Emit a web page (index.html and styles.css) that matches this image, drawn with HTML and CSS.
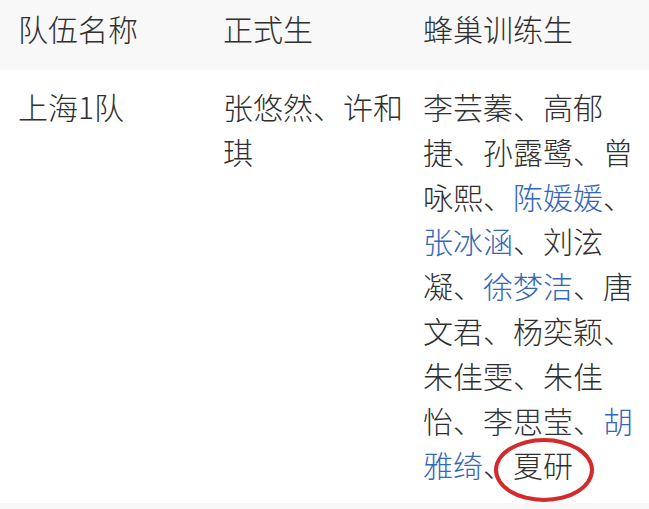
FILE: index.html
```html
<!DOCTYPE html>
<html lang="zh-CN">
<head>
<meta charset="utf-8">
<link rel="stylesheet" href="styles.css">
</head>
<body>
<div class="table">
  <div class="row head">
    <div class="cell c1">队伍名称</div>
    <div class="cell c2">正式生</div>
    <div class="cell c3">蜂巢训练生</div>
  </div>
  <div class="row body">
    <div class="cell c1">上海1队</div>
    <div class="cell c2">张悠然、许和琪</div>
    <div class="cell c3">李芸蓁、高郁捷、孙露鹭、曾咏熙、<span class="link">陈媛媛</span>、<span class="link">张冰涵</span>、刘泫凝、<span class="link">徐梦洁</span>、唐文君、杨奕颖、朱佳雯、朱佳怡、李思莹、<span class="link">胡雅绮</span>、<span class="circled">夏研</span></div>
  </div>
  <div class="row next"></div>
</div>
</body>
</html>
```

FILE: styles.css
```css
html, body {
  margin: 0;
  padding: 0;
  background: #ffffff;
}
body {
  width: 649px;
  height: 509px;
  overflow: hidden;
  font-family: "Noto Sans CJK SC", "Noto Sans", sans-serif;
  font-weight: 300;
  font-size: 30px;
  color: #2f2f2f;
}
.row {
  display: grid;
  grid-template-columns: 205px 200px 226px;
  padding-left: 18px;
}
.head {
  background: #f8f8f8;
  height: 70px;
  align-items: center;
}
.head .cell {
  line-height: 40px;
  padding-bottom: 14px;
}
.body {
  padding-top: 14px;
  padding-bottom: 16px;
  line-height: 44.8px;
  align-items: start;
}
.c2 {
  padding-right: 10px;
}
.link {
  color: #3467b8;
}
.circled {
  position: relative;
}
.circled::after {
  content: "";
  position: absolute;
  left: -19px;
  right: -21px;
  top: -4px;
  bottom: -16px;
  border: 4px solid #d32b2b;
  border-radius: 50%;
}
.next {
  background: #f8f8f8;
  height: 20px;
}
```
